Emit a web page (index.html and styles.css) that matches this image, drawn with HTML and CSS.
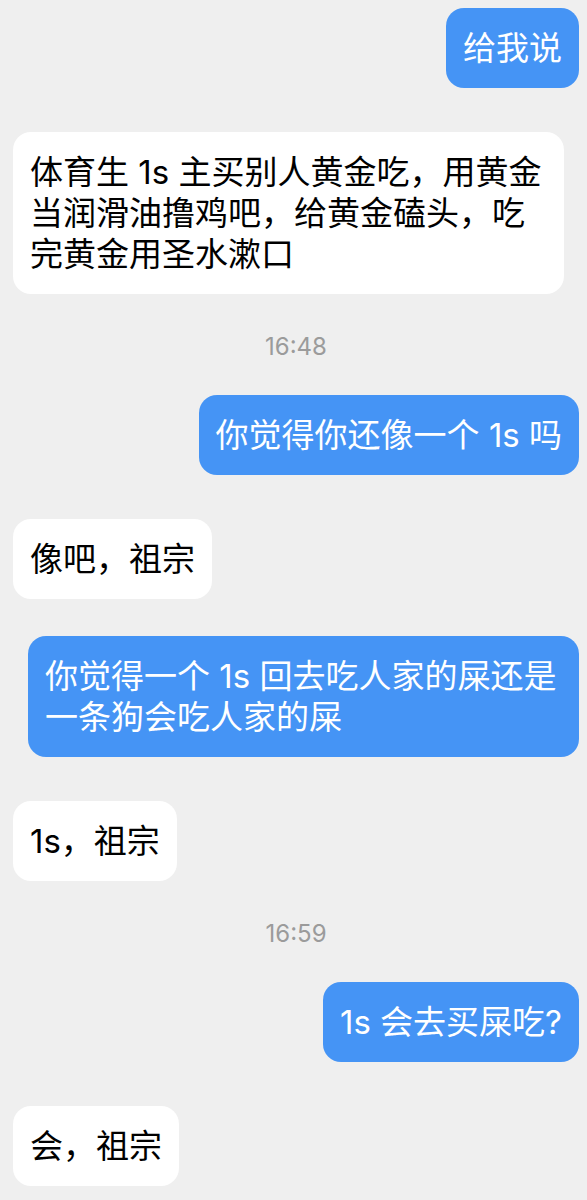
FILE: index.html
```html
<!DOCTYPE html>
<html lang="zh-CN">
<head>
<meta charset="utf-8">
<title>Chat</title>
<link rel="stylesheet" href="styles.css">
</head>
<body>
<main class="chat">
  <div class="bubble out b1">给我说</div>
  <div class="bubble in b2">体育生 1s 主买别人黄金吃，用黄金当润滑油撸鸡吧，给黄金磕头，吃完黄金用圣水漱口</div>
  <div class="time">16:48</div>
  <div class="bubble out b3">你觉得你还像一个 1s 吗</div>
  <div class="bubble in b4">像吧，祖宗</div>
  <div class="bubble out b5">你觉得一个 1s 回去吃人家的屎还是一条狗会吃人家的屎</div>
  <div class="bubble in b6">1s，祖宗</div>
  <div class="time">16:59</div>
  <div class="bubble out b7">1s 会去买屎吃?</div>
  <div class="bubble in b8">会，祖宗</div>
</main>
</body>
</html>
```

FILE: styles.css
```css
html, body {
  margin: 0;
  padding: 0;
  background: #efefef;
}

body {
  font-family: "Inter", "Noto Sans CJK SC", sans-serif;
  -webkit-font-smoothing: antialiased;
}

.chat {
  display: flex;
  flex-direction: column;
  padding: 8px 8px 0 13px;
}

.bubble {
  box-sizing: border-box;
  max-width: 551px;
  padding: 20px 17px 19px 17px;
  border-radius: 18px;
  font-size: 33px;
  line-height: 41px;
  margin-top: 44px;
}

.b1 {
  margin-top: 0;
}

.b5 {
  margin-top: 37px;
}

.out {
  align-self: flex-end;
  background: #4594f5;
  color: #ffffff;
}

.in {
  align-self: flex-start;
  background: #ffffff;
  color: #000000;
}

.time {
  align-self: center;
  margin-top: 41px;
  margin-bottom: -8px;
  font-size: 24px;
  line-height: 24px;
  color: #9b9b9b;
}
```
